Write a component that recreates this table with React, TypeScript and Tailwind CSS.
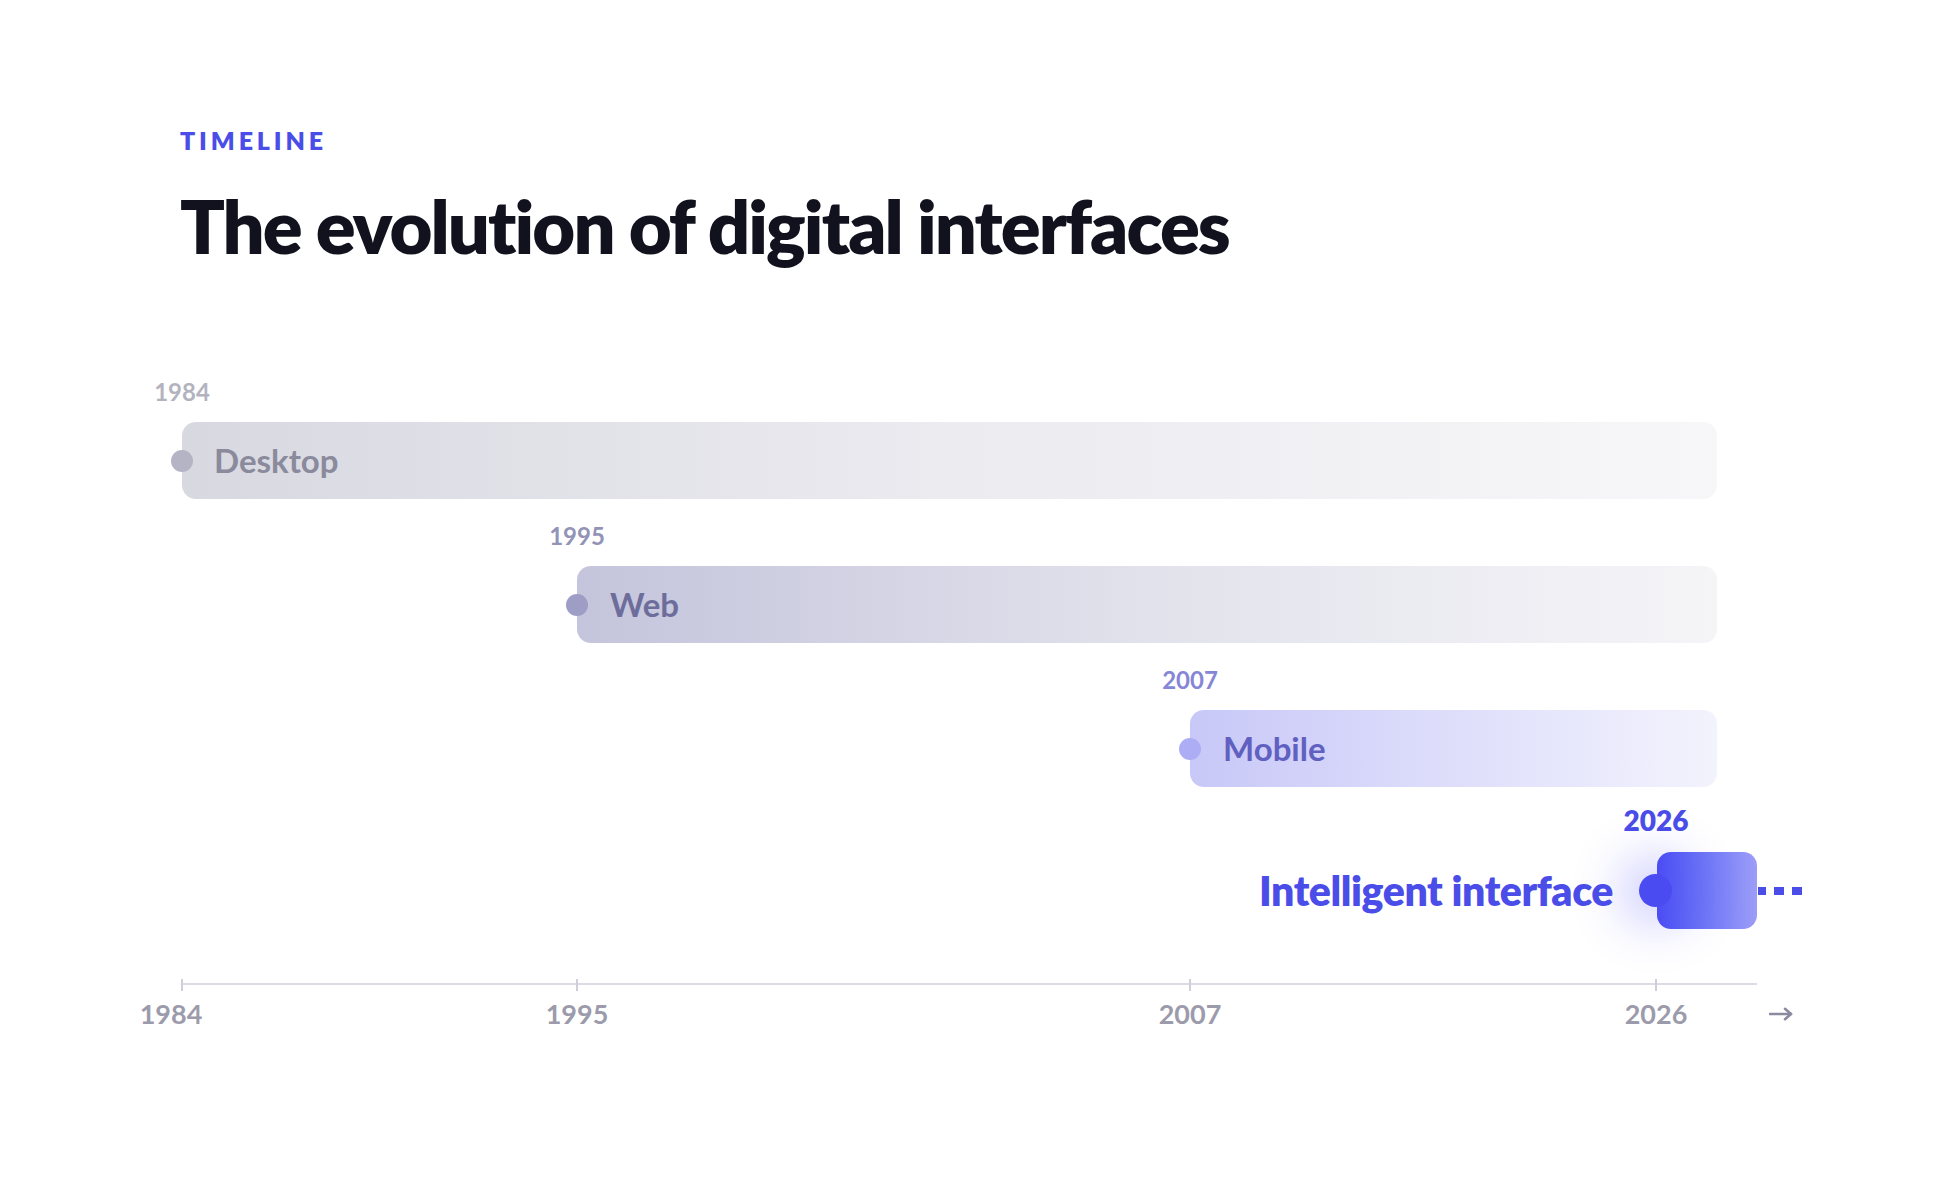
import React from "react";

const font = { fontFamily: '"Lato", "Inter", "Liberation Sans", sans-serif' };

function YearLabel({ text, className }: { text: string; className: string }) {
  return (
    <div className="w-0 flex justify-center">
      <span className={"whitespace-nowrap " + className}>{text}</span>
    </div>
  );
}

export default function App() {
  return (
    <div className="w-[1954px] h-[1200px] bg-white overflow-hidden" style={font}>
      <div className="pl-[180px] pt-[128px]">
        <div className="text-[25px] leading-[25px] font-extrabold tracking-[0.155em] text-[#4b4de8]">TIMELINE</div>
        <h1 className="mt-[36px] text-[74px] leading-[74px] font-extrabold tracking-[-0.026em] text-[#12121f]">
          The evolution of digital interfaces
        </h1>
      </div>

      <div className="ml-[182px] w-[1575px] mt-[117px] flex flex-col">
        {/* Desktop */}
        <div className="flex flex-col">
          <div className="h-6 flex">
            <YearLabel text="1984" className="text-[24px] leading-6 font-bold text-[#b3b3c0]" />
          </div>
          <div className="mt-[18px] relative h-[77px] w-[1535px] rounded-[14px] bg-linear-to-r from-[#d8d8e1] via-[#ebebf0] to-[#f7f7f9] flex items-center pl-[32px]">
            <span className="absolute left-[-11px] top-[28px] w-[22px] h-[22px] rounded-full bg-[#b4b4c4]" />
            <span className="text-[33px] font-bold text-[#8a8a9c]">Desktop</span>
          </div>
        </div>

        {/* Web */}
        <div className="mt-[25px] flex flex-col pl-[395px]">
          <div className="h-6 flex">
            <YearLabel text="1995" className="text-[24px] leading-6 font-bold text-[#9393b8]" />
          </div>
          <div className="mt-[18px] relative h-[77px] w-[1140px] rounded-[14px] bg-linear-to-r from-[#c4c4dc] via-[#e2e2ec] to-[#f5f5f8] flex items-center pl-[33px]">
            <span className="absolute left-[-11px] top-[28px] w-[22px] h-[22px] rounded-full bg-[#9d9dc6]" />
            <span className="text-[33px] font-bold text-[#6d6d9c]">Web</span>
          </div>
        </div>

        {/* Mobile */}
        <div className="mt-[25px] flex flex-col pl-[1008px]">
          <div className="h-6 flex">
            <YearLabel text="2007" className="text-[24px] leading-6 font-bold text-[#8686d6]" />
          </div>
          <div className="mt-[18px] relative h-[77px] w-[527px] rounded-[14px] bg-linear-to-r from-[#c8c8f8] via-[#dedefb] to-[#f3f3fd] flex items-center pl-[33px]">
            <span className="absolute left-[-11px] top-[28px] w-[22px] h-[22px] rounded-full bg-[#adadf6]" />
            <span className="text-[33px] font-bold text-[#6060c0]">Mobile</span>
          </div>
        </div>

        {/* Intelligent interface */}
        <div className="mt-[19px] flex flex-col">
          <div className="h-7 flex justify-end pr-[101px]">
            <YearLabel text="2026" className="text-[28px] leading-7 font-extrabold text-[#4b4de8]" />
          </div>
          <div className="mt-[18px] flex items-center justify-end">
            <span className="text-[41px] leading-none font-extrabold tracking-[-0.01em] text-[#4b4de8]">Intelligent interface</span>
            <div className="ml-[44px] relative h-[77px] w-[100px] shrink-0 rounded-[14px] bg-linear-to-r from-[#4a4af2] to-[#9d9df8]">
              <span className="absolute left-[-18px] top-[22px] w-[33px] h-[33px] rounded-full bg-[#4b4bf2] shadow-[0_0_48px_20px_rgba(90,90,250,0.28)]" />
              <div className="absolute left-[101px] top-[35px] flex gap-[8px]">
                <span className="w-[8px] h-[8px] bg-[#4b4de8]" />
                <span className="w-[10px] h-[8px] bg-[#4b4de8]" />
                <span className="w-[10px] h-[8px] bg-[#4b4de8]" />
              </div>
            </div>
          </div>
        </div>

        {/* Axis */}
        <div className="mt-[54px] relative h-[2px] w-[1575px] bg-[#dcdce6]">
          <span className="absolute left-[-1px] top-[-4px] w-[2px] h-[12px] bg-[#cfcfdb]" />
          <span className="absolute left-[394px] top-[-4px] w-[2px] h-[12px] bg-[#cfcfdb]" />
          <span className="absolute left-[1007px] top-[-4px] w-[2px] h-[12px] bg-[#cfcfdb]" />
          <span className="absolute left-[1473px] top-[-4px] w-[2px] h-[12px] bg-[#cfcfdb]" />
        </div>
        <div className="mt-[15px] h-[27px] flex items-center">
          <div className="ml-[-11px] shrink-0">
            <YearLabel text="1984" className="text-[27px] leading-[27px] font-bold text-[#9b9bab]" />
          </div>
          <div className="ml-[406px] shrink-0">
            <YearLabel text="1995" className="text-[27px] leading-[27px] font-bold text-[#9b9bab]" />
          </div>
          <div className="ml-[613px] shrink-0">
            <YearLabel text="2007" className="text-[27px] leading-[27px] font-bold text-[#9b9bab]" />
          </div>
          <div className="ml-[466px] shrink-0">
            <YearLabel text="2026" className="text-[27px] leading-[27px] font-bold text-[#9b9bab]" />
          </div>
          <svg className="ml-[113px] shrink-0" width="24" height="14" viewBox="0 0 24 14" fill="none">
            <path d="M1 7H22" stroke="#8a8aa0" strokeWidth="2.6" strokeLinecap="round" />
            <path d="M16 1.8L22 7L16 12.2" stroke="#8a8aa0" strokeWidth="2.6" strokeLinecap="round" strokeLinejoin="round" />
          </svg>
        </div>
      </div>
    </div>
  );
}
